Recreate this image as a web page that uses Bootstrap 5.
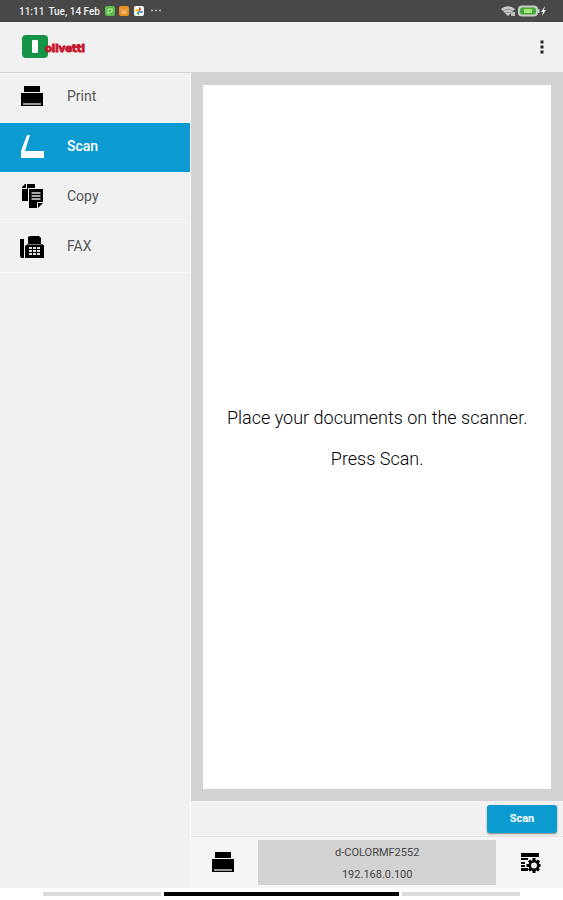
<!DOCTYPE html>
<html lang="en">
<head>
<meta charset="utf-8">
<meta name="viewport" content="width=device-width, initial-scale=1">
<title>Olivetti Mobile Print – Scan</title>
<link href="https://cdn.jsdelivr.net/npm/bootstrap@5.3.0/dist/css/bootstrap.min.css" rel="stylesheet">
<style>
body { font-family: Roboto, "Liberation Sans", sans-serif; background: #f1f1f1; color: #333; }
svg { display: block; flex: none; }
.status-bar { height: 22px; background: #484848; color: #eee; font-size: 10px; font-weight: 500; padding: 0 16px 0 19px; }
.app-bar { height: 51px; padding: 0 13px 0 22px; border-bottom: 1px solid #d2d2d2; }
.logo-text { font-family: "DejaVu Sans", sans-serif; font-size: 10px; line-height: 12px; font-weight: 700; color: #c5172c; margin-left: -4px; padding-top: 4px; -webkit-text-stroke: 1px #c5172c; }
.side-nav { width: 34%; border-right: 1px solid #fafafa; }
.side-nav .nav-link { height: 50px; padding: 0 19px 2px; gap: 22px; font-size: 14px; color: #555; border-bottom: 1px solid #f7f7f7; }
.side-nav .nav-link.active { background: #0b9bd0; color: #fff; font-weight: 500; }
.preview { background: #d2d2d2; padding: 12px; }
.paper { background: #fff; color: #000; font-size: 18px; font-weight: 300; line-height: 21px; gap: 20px; padding-top: 1px; }
.tool-row { height: 36px; padding: 0 6px; border-bottom: 1px solid #e3e3e3; }
.btn-scan { width: 70px; height: 28px; background: #0b9bd0; color: #fff; font-size: 11px; font-weight: 700; line-height: 28px; border-radius: 3px; box-shadow: 0 1px 2px #0007; }
.btn-scan:hover { background: #0889b8; color: #fff; }
.device-row { height: 51px; padding: 3px 0; background: #f5f5f5; }
.device-row .btn { width: 18%; }
.device { background: #d2d2d2; font-size: 11px; line-height: 22px; color: #444; padding-top: 2px; }
.system-bar { height: 12px; background: #fff; padding: 0 43px; gap: 3px; }
.system-bar span { height: 4px; background: #dcdcdc; flex: 1; }
.system-bar .current { background: #000; flex: 2; }
</style>
<script src="https://cdn.jsdelivr.net/npm/bootstrap@5.3.0/dist/js/bootstrap.bundle.min.js" defer></script>
</head>
<body class="d-flex flex-column vh-100 overflow-hidden">
<svg class="d-none" aria-hidden="true">
  <symbol id="printer" viewBox="0 0 26 26"><path fill="#000" d="M5 2h16v6H5zM2 9h22v13H2z"/><path fill="#999" d="M4 19h18v2H4z"/></symbol>
</svg>

<div class="status-bar d-flex align-items-center flex-shrink-0">
  <span>11:11</span><span class="ms-1 me-1">Tue, 14 Feb</span>
  <svg width="60" height="12" viewBox="0 0 60 12">
    <rect x="1" y="1" width="10" height="10" rx="2" fill="#5dbb48"/><path d="M4 4h4v3H6L4 9z" fill="none" stroke="#b9eaa9"/>
    <rect x="15" y="1" width="10" height="10" rx="2" fill="#ee8f26"/><path d="M17 4l3 3 3-3M18 7v1h4V7" fill="none" stroke="#ffdcae"/>
    <rect x="30" y="1" width="10" height="10" rx="2" fill="#fff"/><path d="M35 6V2a2 2 0 0 1 0 4z" fill="#e74335"/><path d="M35 6h4a2 2 0 0 1-4 0z" fill="#4285f4"/><path d="M35 6v4a2 2 0 0 1 0-4z" fill="#34a853"/><path d="M35 6h-4a2 2 0 0 1 4 0z" fill="#fbbc04"/>
    <path d="M47 5.500h2m2 0h2m2 0h2" stroke="#bbb" stroke-width="1.500"/>
  </svg>
  <svg class="ms-auto" width="46" height="14" viewBox="0 0 46 14">
    <path d="M0 5a10.500 10.500 0 0 1 14 0l-7 7z" fill="#ccc"/><path d="M2 6.500q5-3 10 0M4 9q3-2 6 0" fill="none" stroke="#777" stroke-width=".8"/><path d="M10 8h4v4h-4z" fill="#bbb"/>
    <rect x="18" y="2.500" width="18" height="9" rx="3" fill="#49a63a" stroke="#ccc" stroke-width="2"/><path d="M37.500 5v4" stroke="#ccc" stroke-width="2"/><rect x="23" y="5" width="8" height="4" fill="#a7e67b"/>
    <path d="M44 2l-4 6h2l-1 4 4-6h-2z" fill="#eee"/>
  </svg>
</div>

<header class="app-bar d-flex align-items-center justify-content-between flex-shrink-0">
  <a class="d-flex align-items-center text-decoration-none" href="#" aria-label="Olivetti home">
    <svg width="27" height="24" viewBox="0 0 27 24"><rect width="26" height="23" rx="4" fill="#159447"/><rect x="10" y="5" width="6" height="13" rx="1" fill="#fff"/></svg>
    <span class="logo-text">olivetti</span>
  </a>
  <button class="btn border-0 p-1" type="button" aria-label="More options">
    <svg width="8" height="14" viewBox="0 0 8 14"><path d="M2.500.500h3v3h-3zm0 5h3v3h-3zm0 5h3v3h-3z" fill="#222"/></svg>
  </button>
</header>

<div class="d-flex flex-grow-1">
  <nav class="side-nav nav flex-column flex-shrink-0" aria-label="Functions">
    <a class="nav-link d-flex align-items-center" href="#"><svg width="26" height="26"><use href="#printer"/></svg>Print</a>
    <a class="nav-link active d-flex align-items-center" aria-current="page" href="#"><svg width="26" height="26" viewBox="0 0 26 26"><path d="M8 1h3L6 17h19v7H2v-7z" fill="#fff"/></svg>Scan</a>
    <a class="nav-link d-flex align-items-center" href="#"><svg width="26" height="26" viewBox="0 0 26 26"><path d="M8 0h8v4H9v13H3V5h5zM3 4V3l3-3h1v4z"/><path d="M10 5h14v14l-5 5h-9z"/><path d="M12.500 9h9M12.500 12h9M12.500 15h9" stroke="#ddd" stroke-width="1.500"/><path d="M18.500 24v-5.500H24" fill="none" stroke="#f1f1f1"/></svg>Copy</a>
    <a class="nav-link d-flex align-items-center" href="#"><svg width="26" height="26" viewBox="0 0 26 26"><path d="M1 5h4v19H2l-1-2zM6 12l3-2V3l2-1h9l2 2v6l3 1v13H6z"/><path d="M9 10.500h13" stroke="#777"/><path d="M10 13h3v2h-3zm4 0h3v2h-3zm4 0h3v2h-3zm-8 3h3v2h-3zm4 0h3v2h-3zm4 0h3v2h-3zm-8 3h3v2h-3zm4 0h3v2h-3zm4 0h3v2h-3z" fill="#ddd"/></svg>FAX</a>
  </nav>

  <div class="d-flex flex-column flex-grow-1">
    <main class="preview d-flex flex-grow-1">
      <div class="paper d-flex flex-column flex-grow-1 align-items-center justify-content-center text-center">
        <p class="m-0">Place your documents on the scanner.</p>
        <p class="m-0">Press Scan.</p>
      </div>
    </main>
    <div class="tool-row d-flex align-items-center justify-content-end">
      <button class="btn btn-scan border-0 p-0" type="button">Scan</button>
    </div>
    <footer class="device-row d-flex">
      <button class="btn border-0 p-0 pe-1 d-flex align-items-center justify-content-center" type="button" aria-label="Select printer"><svg width="26" height="26"><use href="#printer"/></svg></button>
      <div class="device flex-grow-1 text-center"><div>d-COLORMF2552</div><div>192.168.0.100</div></div>
      <button class="btn border-0 p-0 d-flex align-items-center justify-content-center" type="button" aria-label="Scan settings">
        <svg width="22" height="22" viewBox="0 0 22 22"><path d="M2 1h18v4H2zM2 6h7v2H2zm0 4h4v2H2zm0 3h4v2H2zm0 3h7v3H2z"/><path d="M15 6v15M7.500 13.500h14M10 8.500l10 10M10 18.500l10-10" stroke="#000" stroke-width="3"/><circle cx="15" cy="13.500" r="5.500"/><circle cx="15" cy="13.500" r="3" fill="#f5f5f5"/></svg>
      </button>
    </footer>
  </div>
</div>

<div class="system-bar d-flex align-items-center flex-shrink-0" aria-hidden="true"><span></span><span class="current"></span><span></span></div>
</body>
</html>
